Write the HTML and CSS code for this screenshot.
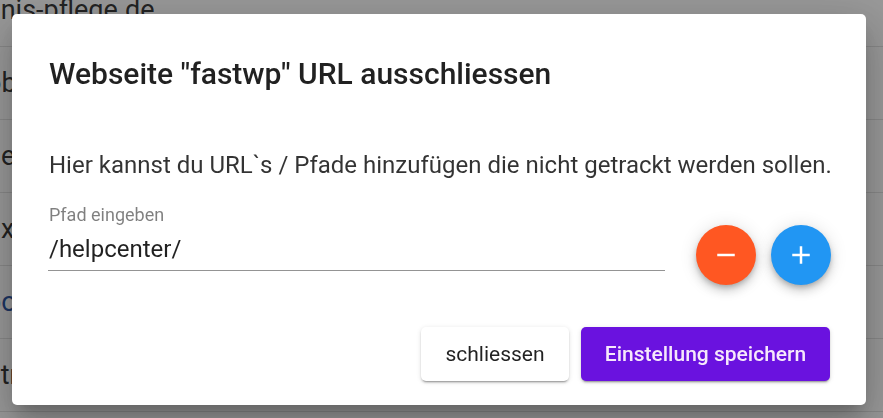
FILE: index.html
```html
<!DOCTYPE html>
<html lang="de">
<head>
<meta charset="utf-8">
<title>URL ausschliessen</title>
<link rel="stylesheet" href="styles.css">
</head>
<body>
<div class="page">
  <ul class="rows">
    <li class="row">anis-pflege.de</li>
    <li class="row">obo-concept.de</li>
    <li class="row">ne-shop.de</li>
    <li class="row">ux-shop.de</li>
    <li class="row"><span class="link">bo</span>x-store.de</li>
    <li class="row">atr-media.de</li>
  </ul>
</div>
<div class="overlay"></div>
<div class="dialog-wrap">
  <div class="dialog">
    <h2 class="title">Webseite "fastwp" URL ausschliessen</h2>
    <p class="text">Hier kannst du URL`s / Pfade hinzufügen die nicht getrackt werden sollen.</p>
    <div class="field-row">
      <div class="field">
        <label class="label">Pfad eingeben</label>
        <div class="value">/helpcenter/</div>
      </div>
      <button class="fab fab-minus" aria-label="entfernen">
        <svg width="24" height="24" viewBox="0 0 24 24"><path d="M19 13H5v-2h14v2z" fill="#fff"/></svg>
      </button>
      <button class="fab fab-plus" aria-label="hinzufügen">
        <svg width="24" height="24" viewBox="0 0 24 24"><path d="M19 13h-6v6h-2v-6H5v-2h6V5h2v6h6v2z" fill="#fff"/></svg>
      </button>
    </div>
    <div class="actions">
      <button class="btn btn-light">schliessen</button>
      <button class="btn btn-primary">Einstellung speichern</button>
    </div>
  </div>
</div>
</body>
</html>
```
FILE: styles.css
```css
* { box-sizing: border-box; }
html, body { margin: 0; padding: 0; }
body {
  width: 883px;
  height: 418px;
  overflow: hidden;
  background: #fff;
  font-family: Roboto, "Noto Sans", Arial, sans-serif;
  color: rgba(0,0,0,.87);
}
.page { width: 883px; height: 418px; overflow: hidden; }
.rows {
  list-style: none;
  margin: -26px 0 0 -14px;
  padding: 0;
}
.row {
  height: 73px;
  display: flex;
  align-items: center;
  font-size: 27px;
  color: rgba(0,0,0,.87);
  border-bottom: 1px solid rgba(0,0,0,.12);
  white-space: nowrap;
}
.link { color: #1a4a9c; }
.overlay {
  position: fixed;
  inset: 0;
  background: rgba(33,33,33,.46);
}
.dialog-wrap {
  position: fixed;
  inset: 0;
  display: flex;
  align-items: flex-start;
  justify-content: flex-start;
  padding: 14px 0 0 12px;
}
.dialog {
  width: 854px;
  height: 391px;
  background: #fff;
  border-radius: 5px;
  box-shadow: 0 11px 15px -7px rgba(0,0,0,.2), 0 24px 38px 3px rgba(0,0,0,.14), 0 9px 46px 8px rgba(0,0,0,.12);
  padding: 40px 35px 0 36px;
  display: flex;
  flex-direction: column;
}
.title {
  margin: 0 0 0 1px;
  font-size: 30px;
  line-height: 40px;
  font-weight: 500;
  color: rgba(0,0,0,.87);
  white-space: nowrap;
}
.text {
  margin: 55px 0 0 1px;
  font-size: 24px;
  line-height: 32px;
  color: rgba(0,0,0,.8);
  white-space: nowrap;
}
.field-row {
  margin-top: 22px;
  display: flex;
  align-items: flex-start;
}
.field {
  width: 617px;
  margin-right: 31px;
  border-bottom: 1px solid rgba(0,0,0,.42);
  padding: 0 0 5px 1px;
}
.label {
  display: block;
  font-size: 18px;
  line-height: 24px;
  color: rgba(0,0,0,.5);
}
.value {
  font-size: 24px;
  line-height: 32px;
  margin-top: 6px;
  color: rgba(0,0,0,.87);
}
.fab {
  width: 60px;
  height: 60px;
  border-radius: 50%;
  border: none;
  padding: 0;
  margin-top: 22px;
  display: flex;
  align-items: center;
  justify-content: center;
  box-shadow: 0 3px 5px -1px rgba(0,0,0,.2), 0 6px 10px 0 rgba(0,0,0,.14), 0 1px 18px 0 rgba(0,0,0,.12);
}
.fab svg { width: 30px; height: 30px; }
.fab-minus { background: #ff5722; }
.fab-plus { background: #2196f3; margin-left: 15px; }
.actions {
  margin-top: 42px;
  display: flex;
  justify-content: flex-end;
  gap: 12px;
  padding-right: 1px;
}
.btn {
  height: 54px;
  border: none;
  border-radius: 5px;
  font-family: Roboto, "Noto Sans", Arial, sans-serif;
  font-size: 21px;
  padding: 0;
  box-shadow: 0 3px 1px -2px rgba(0,0,0,.2), 0 2px 2px 0 rgba(0,0,0,.14), 0 1px 5px 0 rgba(0,0,0,.12);
}
.btn-light {
  width: 148px;
  background: #fff;
  color: rgba(0,0,0,.87);
  font-weight: 400;
}
.btn-primary {
  width: 249px;
  background: #6a12df;
  color: #f6e8fb;
  font-weight: 500;
}
```
